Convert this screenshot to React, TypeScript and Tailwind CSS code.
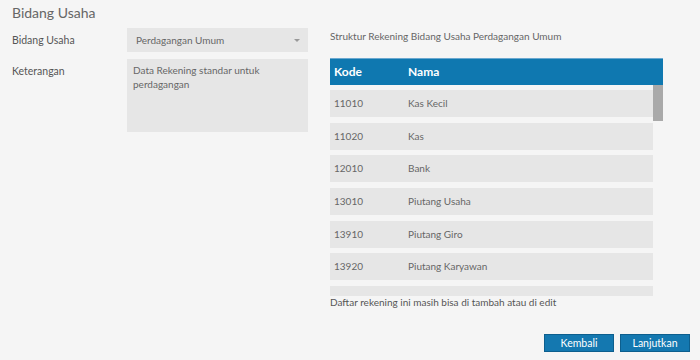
import React from 'react'

const rows = [
  { kode: '11010', nama: 'Kas Kecil' },
  { kode: '11020', nama: 'Kas' },
  { kode: '12010', nama: 'Bank' },
  { kode: '13010', nama: 'Piutang Usaha' },
  { kode: '13910', nama: 'Piutang Giro' },
  { kode: '13920', nama: 'Piutang Karyawan' },
]

const App = () => {
  return (
    <div className="w-[700px] h-[360px] bg-[#f5f5f5] text-[#555] overflow-hidden relative" style={{ fontFamily: 'Lato, "Open Sans", sans-serif' }}>
      <h1 className="pl-[12px] pt-[3px] text-[14px] leading-[20px] text-[#666]">Bidang Usaha</h1>

      <div className="flex mt-[5px]">
        {/* form kiri */}
        <div className="w-[330px] shrink-0">
          <div className="flex">
            <label className="w-[127px] pl-[12px] text-[10.5px] leading-[24px] text-[#555]">Bidang Usaha</label>
            <div className="w-[181px] h-[24px] bg-[#e6e6e6] flex items-center justify-between pl-[9px] pr-[8px]">
              <span className="text-[10px] text-[#666]">Perdagangan Umum</span>
              <span className="w-0 h-0 border-l-[3.5px] border-r-[3.5px] border-t-[3px] border-l-transparent border-r-transparent border-t-[#999]" />
            </div>
          </div>
          <div className="flex mt-[7px]">
            <label className="w-[127px] pl-[12px] text-[10.5px] leading-[24px] text-[#555]">Keterangan</label>
            <div className="w-[181px] h-[73px] bg-[#e6e6e6] px-[6px] pt-[4px] text-[10px] leading-[14px] text-[#666]">
              Data Rekening standar untuk perdagangan
            </div>
          </div>
        </div>

        {/* tabel kanan */}
        <div className="w-[333px]">
          <p className="text-[10px] leading-[14px] text-[#666] mt-[1px]">Struktur Rekening Bidang Usaha Perdagangan Umum</p>
          <div className="mt-[15px] h-[27px] bg-[#0f78b0] border-t border-[#6aa8d0] flex items-center text-white font-bold text-[12px]">
            <span className="w-[78px] pl-[4px]">Kode</span>
            <span>Nama</span>
          </div>
          <div className="flex h-[211px] overflow-hidden">
            <div className="flex-1 flex flex-col gap-[5.7px] pt-[5px]">
              {rows.map((row) => (
                <div key={row.kode} className="h-[27px] shrink-0 bg-[#e6e6e6] flex items-center text-[10px] text-[#666]">
                  <span className="w-[78px] pl-[4px]">{row.kode}</span>
                  <span>{row.nama}</span>
                </div>
              ))}
              <div className="h-[27px] shrink-0 bg-[#e6e6e6]" />
            </div>
            <div className="w-[10px] shrink-0">
              <div className="h-[36px] bg-[#a9a9a9]" />
            </div>
          </div>
          <p className="text-[10px] leading-[14px] text-[#555] mt-[-1px]">Daftar rekening ini masih bisa di tambah atau di edit</p>
        </div>
      </div>

      <div className="absolute right-[10px] bottom-[8px] flex gap-[6px]">
        <button className="w-[70px] h-[18px] bg-[#1478b0] border border-[#0d5f8e] text-white text-[10.5px] leading-[16px]">Kembali</button>
        <button className="w-[70px] h-[18px] bg-[#1478b0] border border-[#0d5f8e] text-white text-[10.5px] leading-[16px]">Lanjutkan</button>
      </div>
    </div>
  )
}

export default App
